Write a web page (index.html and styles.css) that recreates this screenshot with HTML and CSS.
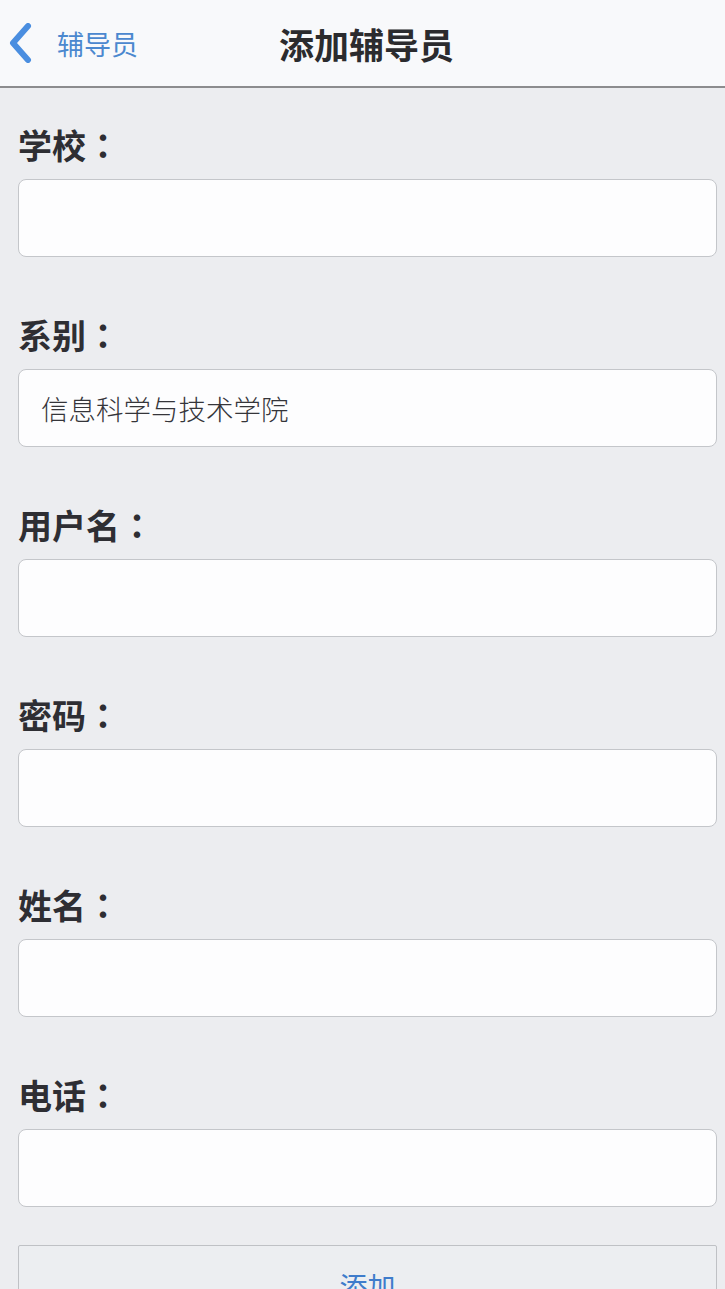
FILE: index.html
```html
<!DOCTYPE html>
<html lang="zh-CN">
<head>
<meta charset="utf-8">
<title>添加辅导员</title>
<link rel="stylesheet" href="styles.css">
</head>
<body>
<header class="navbar">
  <a class="back">
    <svg class="chevron" width="26" height="40" viewBox="0 0 26 40"><path d="M20 3 L5 20 L20 37" fill="none" stroke="#4a8ee0" stroke-width="6" stroke-linecap="round" stroke-linejoin="round"/></svg>
    <span class="back-text">辅导员</span>
  </a>
  <h1 class="title">添加辅导员</h1>
</header>
<main class="form">
  <div class="field">
    <label class="label">学校<span class="colon" lang="zh-TW">：</span></label>
    <div class="input"></div>
  </div>
  <div class="field">
    <label class="label">系别<span class="colon" lang="zh-TW">：</span></label>
    <div class="input"><span class="value">信息科学与技术学院</span></div>
  </div>
  <div class="field">
    <label class="label">用户名<span class="colon" lang="zh-TW">：</span></label>
    <div class="input"></div>
  </div>
  <div class="field">
    <label class="label">密码<span class="colon" lang="zh-TW">：</span></label>
    <div class="input"></div>
  </div>
  <div class="field">
    <label class="label">姓名<span class="colon" lang="zh-TW">：</span></label>
    <div class="input"></div>
  </div>
  <div class="field">
    <label class="label">电话<span class="colon" lang="zh-TW">：</span></label>
    <div class="input"></div>
  </div>
  <button class="submit">添加</button>
</main>
</body>
</html>
```
FILE: styles.css
```css
html, body {
  margin: 0;
  padding: 0;
  background: #ecedf0;
  font-family: "Noto Sans CJK SC", "Noto Sans", sans-serif;
  overflow: hidden;
}
.navbar {
  position: relative;
  height: 86px;
  background: #f8f9fb;
  border-bottom: 2px solid #8c8c8e;
  display: flex;
  align-items: center;
  justify-content: center;
}
.back {
  position: absolute;
  left: 8px;
  top: 0;
  bottom: 0;
  display: flex;
  align-items: center;
  gap: 23px;
}
.chevron {
  display: block;
}
.back-text {
  font-size: 27px;
  color: #4b88cf;
  line-height: 1;
}
.title {
  margin: 0;
  font-size: 35px;
  font-weight: 700;
  color: #2b2b2e;
  line-height: 1;
  padding-left: 8px;
}
.form {
  padding: 37px 8px 0 18px;
  display: flex;
  flex-direction: column;
}
.field {
  display: flex;
  flex-direction: column;
  gap: 14px;
  margin-bottom: 58px;
}
.field:last-of-type {
  margin-bottom: 38px;
}
.label {
  font-size: 34px;
  line-height: 40px;
  font-weight: 700;
  color: #2e2e33;
}
.colon {
  font-family: "Noto Sans CJK TC", "Noto Sans CJK SC", sans-serif;
  font-weight: 700;
}
.input {
  height: 76px;
  background: #fdfdfe;
  border: 1px solid #c4c6ca;
  border-radius: 8px;
  display: flex;
  align-items: center;
  padding-left: 22px;
}
.value {
  font-size: 27.5px;
  color: #35353a;
  font-weight: 300;
}
.submit {
  height: 82px;
  background: #eceef1;
  border: 1px solid #bfc1c5;
  border-radius: 2px;
  font-family: inherit;
  font-size: 28px;
  color: #3f7ccb;
  padding: 0;
}
```
